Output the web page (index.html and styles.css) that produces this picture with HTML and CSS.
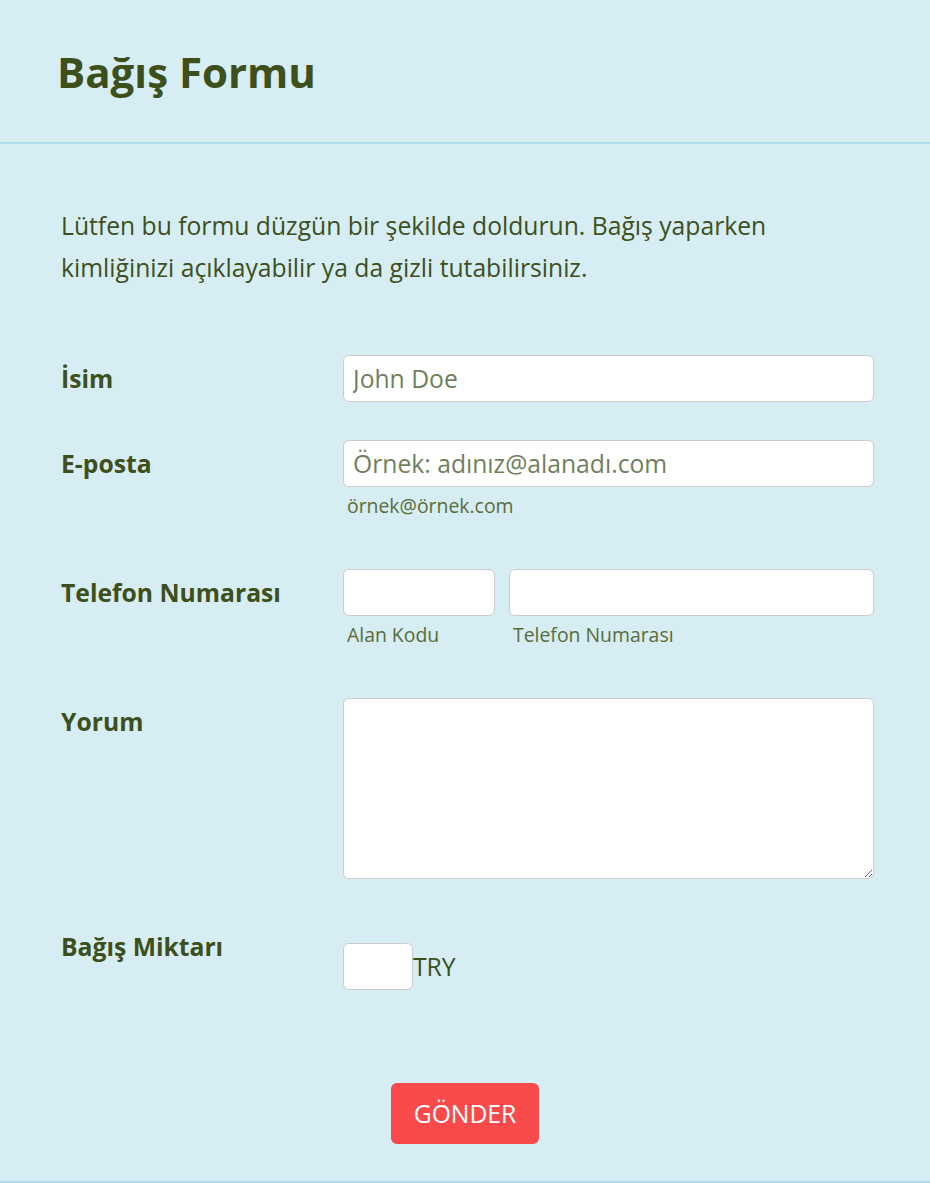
FILE: index.html
```html
<!DOCTYPE html>
<html lang="tr">
<head>
    <meta charset="UTF-8">
    <meta name="viewport" content="width=device-width, initial-scale=1.0">
    <title>Bağış Formu</title>
    <link rel="stylesheet" href="styles.css">
</head>
<body>
    <div class="page">
        <div class="header">
            <h1>Bağış Formu</h1>
        </div>

        <form class="form">
            <p class="intro">Lütfen bu formu düzgün bir şekilde doldurun. Bağış yaparken kimliğinizi açıklayabilir ya da gizli tutabilirsiniz.</p>

            <div class="row">
                <label for="name">İsim</label>
                <div class="field">
                    <input type="text" id="name" placeholder="John Doe">
                </div>
            </div>

            <div class="row row-sub">
                <label for="email">E-posta</label>
                <div class="field">
                    <input type="text" id="email" placeholder="Örnek: adınız@alanadı.com">
                    <span class="sub">örnek@örnek.com</span>
                </div>
            </div>

            <div class="row row-sub">
                <label for="area">Telefon Numarası</label>
                <div class="field phone">
                    <div class="area">
                        <input type="text" id="area">
                        <span class="sub">Alan Kodu</span>
                    </div>
                    <div class="number">
                        <input type="text" id="phone">
                        <span class="sub">Telefon Numarası</span>
                    </div>
                </div>
            </div>

            <div class="row row-tall">
                <label for="comment">Yorum</label>
                <div class="field">
                    <textarea id="comment"></textarea>
                </div>
            </div>

            <div class="row">
                <label for="amount">Bağış Miktarı</label>
                <div class="field amount">
                    <input type="text" id="amount">
                    <span class="currency">TRY</span>
                </div>
            </div>

            <div class="actions">
                <button type="submit">GÖNDER</button>
            </div>
        </form>
    </div>
</body>
</html>
```

FILE: styles.css
```css
body {
    margin: 0;
    padding: 0;
    font-family: "Open Sans", "Noto Sans", sans-serif;
    background-color: #d5edf3;
    color: #3e4f1c;
}

.page {
    height: 1181px;
    border-bottom: 2px solid #acdde9;
}

.header {
    height: 142px;
    border-bottom: 2px solid #acdde9;
    padding: 0 57px;
    display: flex;
    align-items: center;
}

h1 {
    margin: 0;
    font-size: 42px;
    font-weight: 700;
    color: #3d4f1b;
}

.form {
    padding: 61px 56px 0 61px;
}

.intro {
    margin: 0 0 66px;
    font-size: 24.7px;
    line-height: 42px;
    max-width: 740px;
}

.row {
    display: flex;
    margin-bottom: 38px;
}

.row-sub {
    margin-bottom: 51px;
}

.row-tall {
    margin-bottom: 44px;
}

.row label {
    width: 282px;
    flex-shrink: 0;
    font-size: 24.7px;
    font-weight: 700;
    line-height: 47px;
}

.field {
    flex: 1;
    display: flex;
    flex-direction: column;
}

input, textarea {
    box-sizing: border-box;
    width: 100%;
    height: 47px;
    padding: 0 9px;
    border: 1px solid #cccccc;
    border-radius: 6px;
    background-color: #fff;
    font-family: inherit;
    font-size: 24.7px;
    color: #3e4f1c;
}

input::placeholder {
    color: #6f7f5d;
}

textarea {
    height: 181px;
    padding: 8px 9px;
}

.sub {
    margin: 7px 0 0 4px;
    font-size: 19.4px;
    line-height: 24px;
    color: #5b6c39;
}

.phone {
    flex-direction: row;
    gap: 14px;
}

.area {
    width: 152px;
    display: flex;
    flex-direction: column;
}

.number {
    flex: 1;
    display: flex;
    flex-direction: column;
}

.amount {
    flex-direction: row;
    align-items: center;
    padding-top: 20px;
}

.amount input {
    width: 70px;
}

.currency {
    font-size: 24.7px;
}

.actions {
    display: flex;
    justify-content: center;
    padding: 55px 0 0 0;
    margin-left: -5px;
}

button {
    width: 148px;
    height: 61px;
    border: none;
    border-radius: 6px;
    background-color: #f84a4a;
    color: #fff;
    font-family: inherit;
    font-size: 24.7px;
    cursor: pointer;
}
```
